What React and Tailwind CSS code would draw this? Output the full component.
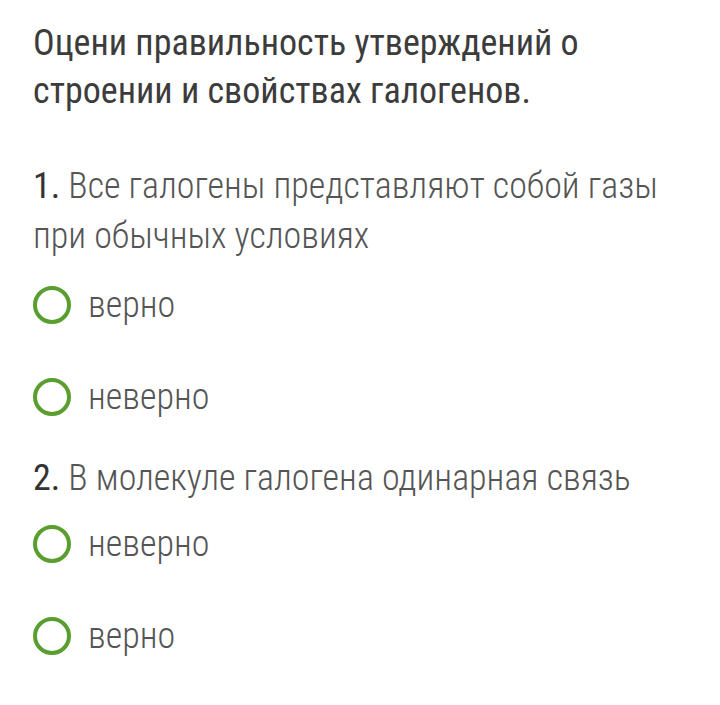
export default function App() {
  const Radio = ({ label }) => (
    <div className="flex items-center h-[92px]">
      <span className="w-[38px] h-[38px] rounded-full border-[4px] border-[#5a9e2f] shrink-0" />
      <span className="ml-[17px] text-[36px] font-light text-[#555] leading-none">{label}</span>
    </div>
  );
  return (
    <div className="w-[720px] h-[705px] bg-white overflow-hidden pl-[33px] pt-[19px] [font-family:'Roboto',sans-serif] [font-stretch:condensed]">
      <h1 className="text-[36px] font-normal text-[#3c3c3c] leading-[48px]">
        Оцени правильность утверждений о<br />строении и свойствах галогенов.
      </h1>
      <div className="mt-[46px] text-[36px] font-light text-[#555] leading-[50px]">
        <span className="font-normal text-[#333]">1.</span> Все галогены представляют собой газы<br />при обычных условиях
      </div>
      <div className="mt-[-2px]">
        <Radio label="верно" />
        <Radio label="неверно" />
      </div>
      <div className="text-[36px] font-light text-[#555] leading-[50px] mt-[10px]">
        <span className="font-normal text-[#333]">2.</span> В молекуле галогена одинарная связь
      </div>
      <div className="mt-[-5px]">
        <Radio label="неверно" />
        <Radio label="верно" />
      </div>
    </div>
  );
}
